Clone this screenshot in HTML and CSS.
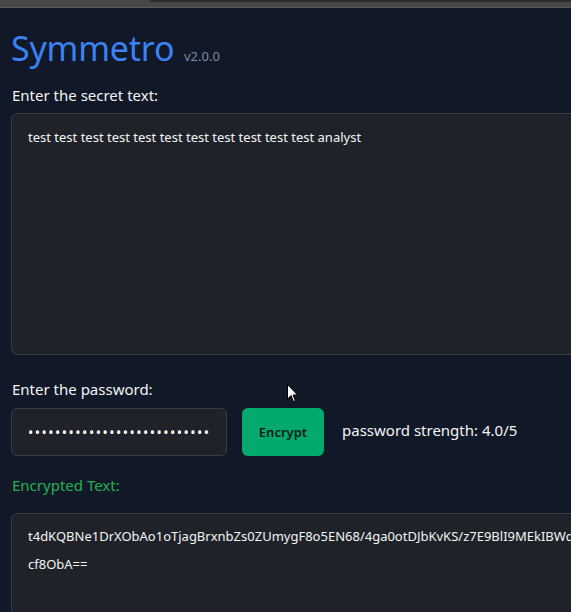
FILE: index.html
```html
<!DOCTYPE html>
<html lang="en">
<head>
<meta charset="utf-8">
<title>Symmetro</title>
<link rel="stylesheet" href="styles.css">
</head>
<body>
<div class="chrome"><div class="chrome-tab"></div></div>
<main class="app">
  <h1 class="title">Symmetro <span class="version">v2.0.0</span></h1>
  <label class="label" for="secret">Enter the secret text:</label>
  <div class="box box-secret" id="secret">test test test test test test test test test test test analyst</div>
  <label class="label label-pw" for="pw">Enter the password:</label>
  <div class="pw-row">
    <input class="pw-input" id="pw" type="password" value="aaaaaaaaaaaaaaaaaaaaaaaaaaa" readonly>
    <button class="btn">Encrypt</button>
    <span class="strength">password strength: 4.0/5</span>
  </div>
  <div class="label label-out">Encrypted Text:</div>
  <div class="box box-out">
    <div class="line">t4dKQBNe1DrXObAo1oTjagBrxnbZs0ZUmygF8o5EN68/4ga0otDJbKvKS/z7E9BlI9MEkIBWq7Lx2</div>
    <div class="line">cf8ObA==</div>
  </div>
</main>
<svg class="cursor" width="12" height="19" viewBox="0 0 12 19"><path d="M0.5 0.5 L0.5 15 L4 11.5 L6.5 17.5 L8.5 16.7 L6 11 L10.5 11 Z" fill="#fff" stroke="#000" stroke-width="1"/></svg>
</body>
</html>
```
FILE: styles.css
```css
html, body {
  margin: 0;
  padding: 0;
  overflow: hidden;
  background: #111827;
}
body {
  font-family: "Noto Sans", "Open Sans", sans-serif;
  color: #f3f4f6;
  width: 571px;
  height: 612px;
  position: relative;
}
.chrome {
  height: 7px;
  background: #474747;
  border-bottom: 1px solid #5a5a5a;
  position: relative;
}
.chrome-tab {
  position: absolute;
  left: 150px;
  right: 0;
  top: 0;
  height: 2px;
  background: #2c2c2c;
  border-bottom-left-radius: 3px;
}
.app {
  padding: 0 0 0 11px;
  display: flex;
  flex-direction: column;
  align-items: flex-start;
}
.title {
  margin: 20px 0 0 0;
  font-weight: 400;
  font-size: 34px;
  line-height: 40px;
  color: #3b82f6;
  letter-spacing: -0.2px;
}
.version {
  font-size: 13px;
  color: #7d8ca3;
  letter-spacing: 0;
  margin-left: 1px;
}
.label {
  font-size: 15px;
  line-height: 20px;
  margin: 9px 0 0 1px;
  color: #f3f4f6;
}
.box {
  box-sizing: border-box;
  width: 640px;
  background: #1f2329;
  border: 1px solid #383d45;
  border-radius: 6px;
  font-size: 13px;
  color: #f3f4f6;
  padding: 14px 16px;
}
.box-secret {
  margin-top: 8px;
  height: 242px;
  line-height: 18px;
}
.label-pw {
  margin-top: 24px;
}
.pw-row {
  display: flex;
  align-items: center;
  margin-top: 9px;
}
.pw-input {
  box-sizing: border-box;
  width: 216px;
  height: 48px;
  background: #1f2329;
  border: 1px solid #383d45;
  border-radius: 6px;
  color: #fff;
  font-family: "Noto Sans", sans-serif;
  font-size: 14px;
  padding: 0 16px;
  letter-spacing: 1.5px;
  outline: none;
}
.btn {
  margin-left: 15px;
  width: 82px;
  height: 48px;
  border: none;
  border-radius: 6px;
  background: #03a96d;
  color: #0b1a14;
  font-family: "Noto Sans", sans-serif;
  font-size: 13px;
  font-weight: 600;
}
.strength {
  margin-left: 18px;
  font-size: 15px;
  margin-top: -4px;
}
.label-out {
  color: #22b34f;
  margin-top: 19px;
}
.box-out {
  margin-top: 18px;
  height: 140px;
  line-height: 28px;
  padding: 8px 16px;
  white-space: nowrap;
  overflow: hidden;
}
.cursor {
  position: absolute;
  left: 287px;
  top: 384px;
}
```
